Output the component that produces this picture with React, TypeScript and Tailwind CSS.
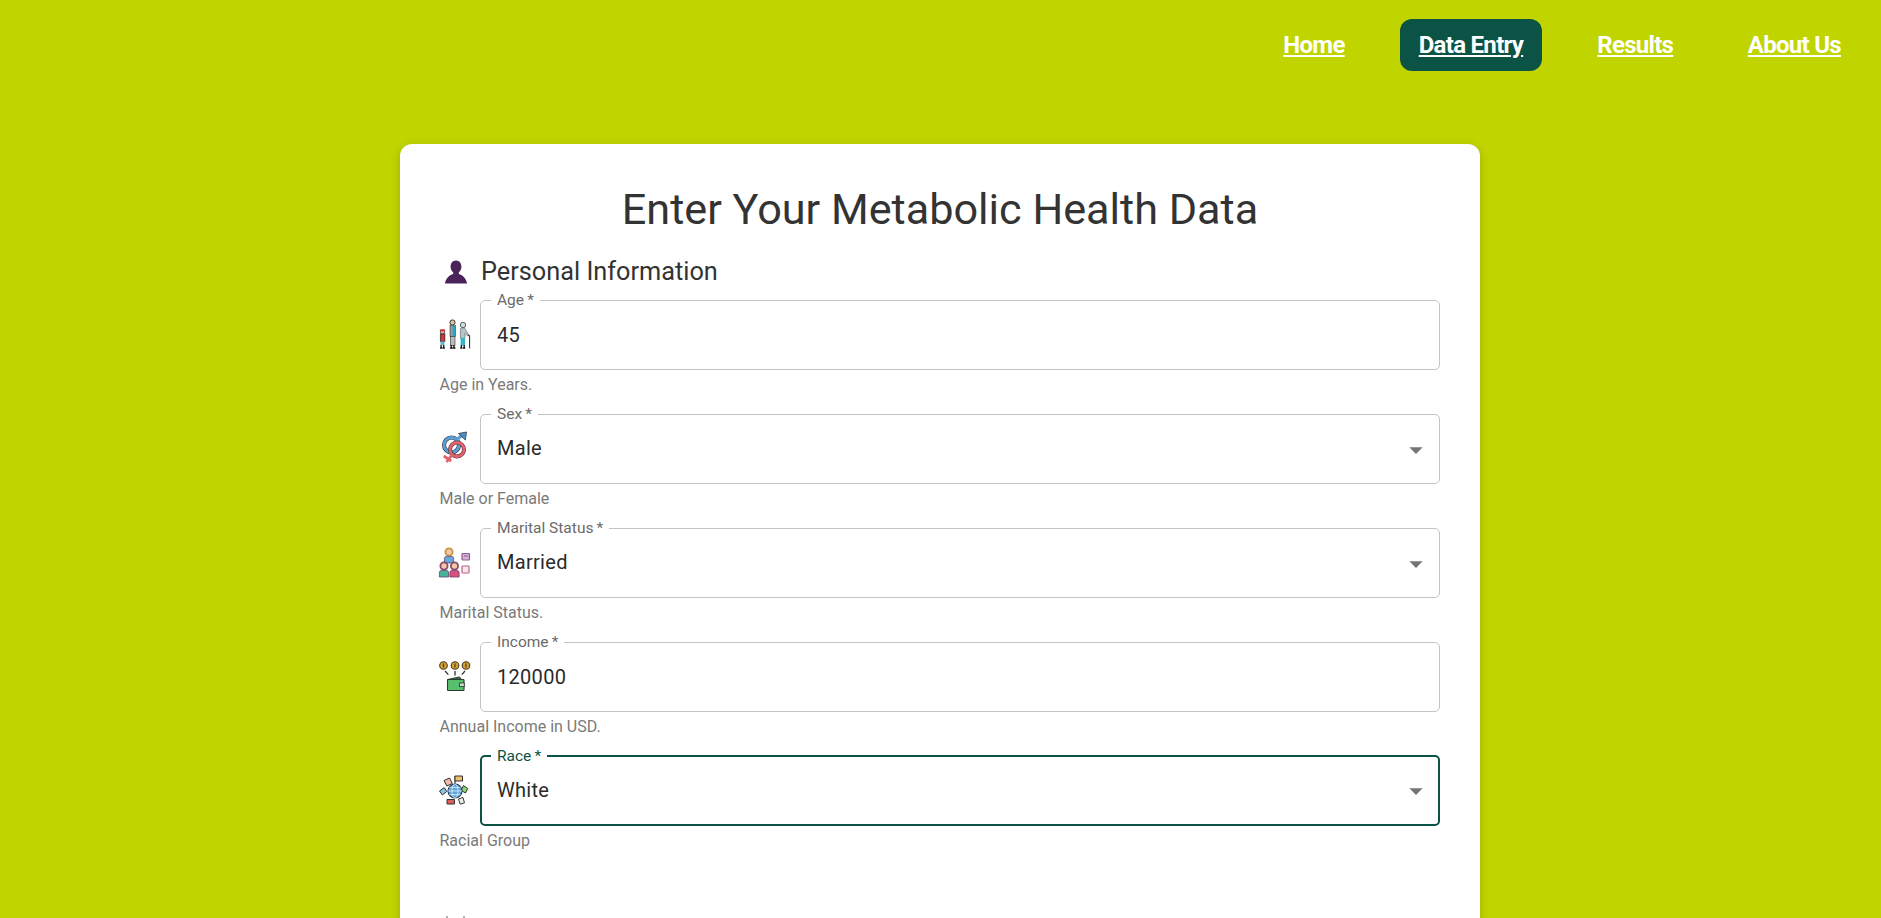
import type { ReactNode } from "react";

const navItems = ["Home", "Data Entry", "Results", "About Us"];

function AgeIcon() {
  return (
    <svg viewBox="0 0 40 40" className="w-10 h-10 shrink-0 -ml-[5px] mr-[5px]">
      {/* child */}
      <circle cx="7.500" cy="17" r="2.200" fill="#e9b9a0" stroke="#222" strokeWidth="0.700" />
      <path d="M4.900 16.400h5.200v-2h-5.200z" fill="#c83a3f" />
      <rect x="5.300" y="19" width="4.600" height="7.500" fill="#c83a3f" stroke="#222" strokeWidth="0.700" />
      <rect x="5.500" y="26.500" width="4" height="3.500" fill="#5fb6c6" />
      <path d="M5.100 33h2.200M7.700 33h2.200M6.100 30v3M8.700 30v3" stroke="#111" strokeWidth="1.300" />
      {/* adult */}
      <circle cx="17.500" cy="7.500" r="2.600" fill="#d9c2ae" stroke="#222" strokeWidth="0.900" />
      <rect x="15" y="10.500" width="5.400" height="11" fill="#9a9a9a" stroke="#333" strokeWidth="0.600" />
      <rect x="17.600" y="10.600" width="2.600" height="10.800" fill="#27a7c4" />
      <rect x="15.400" y="21.500" width="4.600" height="9" fill="#bbb" stroke="#333" strokeWidth="0.600" />
      <path d="M15 33h2.600M17.800 33h2.600M16.200 30v3M19 30v3" stroke="#111" strokeWidth="1.300" />
      {/* elder */}
      <circle cx="28" cy="10" r="2.700" fill="#d5dbdc" stroke="#566" strokeWidth="1" />
      <path d="M25.400 13.500l4-.8 4.400 7-1.500 1-2.300-2.400v5h-4.600z" fill="#b9c4c6" stroke="#566" strokeWidth="0.600" />
      <rect x="25.600" y="23" width="4.400" height="7.500" fill="#37b4cc" />
      <path d="M25.200 33h2.200M28 33h2.200M26.400 30v3M29.200 30v3" stroke="#111" strokeWidth="1.300" />
      <path d="M34.600 20.500v12.800M33 21.200q0-1.400 1.600-.9" stroke="#222" strokeWidth="1" fill="none" />
    </svg>
  );
}

function SexIcon() {
  return (
    <svg viewBox="0 0.500 40 40" className="w-10 h-10 shrink-0 -ml-[5px] mr-[5px]">
      <circle cx="16.500" cy="16.500" r="7.500" fill="none" stroke="#3f4452" strokeWidth="4.200" />
      <circle cx="16.500" cy="16.500" r="7.500" fill="none" stroke="#5a9fd6" strokeWidth="2.800" />
      <path d="M22 11l6-5" stroke="#5a9fd6" strokeWidth="3" />
      <path d="M23.500 5l8-1.500-1.200 8z" fill="#4b8fc8" stroke="#2f3b4a" strokeWidth="0.800" />
      <circle cx="22" cy="21" r="7" fill="none" stroke="#4a3a44" strokeWidth="4" />
      <circle cx="22" cy="21" r="7" fill="none" stroke="#e2636d" strokeWidth="2.800" />
      <path d="M17.200 26.200l-5.700 7.300M8.800 27.500l7.400 5" stroke="#e2636d" strokeWidth="2.800" />
    </svg>
  );
}

function MaritalIcon() {
  const Person = ({ x, y, shirt, hair }: { x: number; y: number; shirt: string; hair: string }) => (
    <g>
      <circle cx={x} cy={y} r="3.600" fill="#f2c9a8" stroke={hair} strokeWidth="1.800" />
      <path
        d={`M${x - 4.6} ${y + 11}v-4.4q0-2.2 2.2-2.2h4.800q2.200 0 2.200 2.200v4.400z`}
        fill={shirt}
        stroke="#6a3f6d"
        strokeWidth="0.800"
      />
    </g>
  );
  return (
    <svg viewBox="0 0 40 40" className="w-10 h-10 shrink-0 -ml-[5px] mr-[5px]">
      <Person x={14} y={9} shirt="#63a9dc" hair="#c9943f" />
      <Person x={9} y={23} shirt="#47b39b" hair="#8a4a6a" />
      <Person x={19.5} y={23} shirt="#d9517f" hair="#8a4a6a" />
      <rect x="27" y="10.500" width="7.500" height="6.500" rx="0.800" fill="#d7b2d8" stroke="#8c5a94" strokeWidth="1.200" />
      <path d="M29 13h4" stroke="#8c5a94" strokeWidth="1" />
      <rect x="27" y="23" width="7" height="7" rx="0.800" fill="#fde6e4" stroke="#b2688c" strokeWidth="1.200" />
    </svg>
  );
}

function IncomeIcon() {
  return (
    <svg viewBox="0 0 40 40" className="w-10 h-10 shrink-0 -ml-[5px] mr-[5px]">
      {[8.5, 20, 31].map((cx) => (
        <g key={cx}>
          <circle cx={cx} cy="8.500" r="3.800" fill="#d4a02f" stroke="#4a3b22" strokeWidth="1.100" />
          <path d={`M${cx} 6.500v4`} stroke="#4a3b22" strokeWidth="1.200" />
        </g>
      ))}
      <path d="M10 14l3.400 3.600M20 14v4.500M30 14l-3.200 3.600" stroke="#333" strokeWidth="1.300" />
      <path d="M12.500 22.500l12-2.600 2 2.600z" fill="#2f6d43" stroke="#22352a" strokeWidth="0.900" />
      <rect x="12.500" y="22.500" width="16.500" height="11" rx="0.800" fill="#58c06c" stroke="#2d3b30" strokeWidth="1.100" />
      <rect x="24.500" y="26" width="4.800" height="3.600" fill="#cfd9d2" stroke="#2d3b30" strokeWidth="0.800" />
    </svg>
  );
}

function RaceIcon() {
  return (
    <svg viewBox="0 0 40 40" className="w-10 h-10 shrink-0 -ml-[5px] mr-[5px]">
      <path d="M9 9.500l5.500-2.500 2.800 5.500-5.500 2.500z" fill="#f0b9ac" stroke="#333" strokeWidth="1" />
      <path d="M20 13V5" stroke="#333" strokeWidth="1.200" />
      <path d="M20 5h7.500v5H20z" fill="#efc06a" stroke="#333" strokeWidth="1" />
      <path d="M28.500 14.500l4.200 3-2.200 4.500-4.400-2.600z" fill="#8fd36f" stroke="#333" strokeWidth="1" />
      <path d="M4.500 20l4.700-3.400 2.600 3.800-4.400 3.600z" fill="#86c5e8" stroke="#333" strokeWidth="1" />
      <path d="M12 28.500h7.500v4.500H12z" fill="#e25a5a" stroke="#333" strokeWidth="1" />
      <path d="M23.500 28l4.400-1.600 1.600 5.400-4.400 1.400z" fill="#eee" stroke="#333" strokeWidth="1" />
      <circle cx="20" cy="20" r="7" fill="#5ea6dd" stroke="#23364a" strokeWidth="1.100" />
      <ellipse cx="20" cy="20" rx="3" ry="7" fill="none" stroke="#dff0fb" strokeWidth="0.800" />
      <path d="M13 20h14M14.400 16.400h11.200M14.400 23.600h11.200" stroke="#dff0fb" strokeWidth="0.800" />
    </svg>
  );
}

function OutlinedField({
  label,
  value,
  select,
  focused,
  icon,
  helper,
}: {
  label: string;
  value: string;
  select?: boolean;
  focused?: boolean;
  icon: ReactNode;
  helper: string;
}) {
  return (
    <div>
      <div className="flex items-center">
        {icon}
        <fieldset
          className={
            focused
              ? "flex-1 h-[78px] -mt-[8px] rounded-[5px] border-2 border-[#0b5345] pl-[15px] pr-[6px] flex items-center"
              : "flex-1 h-[78px] -mt-[8px] rounded-[5px] border border-[#c4c4c4] pl-[16px] pr-[7px] flex items-center"
          }
        >
          <legend
            className={
              focused
                ? "ml-[-6px] px-[6px] text-[15.5px] leading-[16px] text-[#0b5345]"
                : "ml-[-6px] px-[6px] text-[15.5px] leading-[16px] text-[#6b6b6b]"
            }
          >
            {label}
          </legend>
          <span
            className={
              select
                ? "flex-1 text-[20px] leading-[24px] tracking-[0.3px] text-[#2b2b2b] -mt-[8.5px]"
                : "flex-1 text-[20px] leading-[24px] tracking-[0.3px] text-[#2b2b2b] -mt-[7px]"
            }
          >
            {value}
          </span>
          {select && (
            <svg viewBox="0 0 24 24" className="w-8 h-8 -mt-[6px] fill-[#757575]">
              <path d="M7 10l5 5 5-5z" />
            </svg>
          )}
        </fieldset>
      </div>
      <p className="mt-[3px] -ml-[0.5px] text-[16px] leading-[24px] text-[#7a7a7a]">{helper}</p>
    </div>
  );
}

export default function App() {
  return (
    <div className="h-[918px] overflow-hidden bg-[#c0d400] font-['Roboto',sans-serif]">
      {/* nav */}
      <nav className="flex justify-end items-center gap-[36.5px] pr-[21px] pt-[19px]">
        {navItems.map((item) =>
          item === "Data Entry" ? (
            <a key={item} className="h-[52px] px-[18.5px] flex items-center rounded-[12px] bg-[#0b5345] text-white text-[24px] font-bold tracking-[-0.7px] underline">
              {item}
            </a>
          ) : (
            <a key={item} className="h-[52px] px-[19px] flex items-center text-white text-[24px] font-bold tracking-[-0.7px] underline">
              {item}
            </a>
          )
        )}
      </nav>

      <main className="w-[1080px] ml-[400px] mt-[73px] bg-white rounded-[12px] shadow-[0_3px_10px_rgba(0,0,0,0.18)] px-10 pt-[38px] pb-20">
        <h1 className="text-center text-[43.2px] leading-[56px] font-normal text-[#333333]">
          Enter Your Metabolic Health Data
        </h1>

        <div className="flex items-center mt-[16px] mb-[10px] h-[36px]">
          <svg viewBox="0 0 24 24" className="w-6 h-6 fill-[#4a235a] ml-[4px] mr-[13px] shrink-0">
            <path d="M12 .500c-3.400 0-5.400 2.800-5.400 6.200 0 2.400 1 4.400 2.600 5.600v1.800c-3.600 1-7.200 3.600-8.200 9.400h22c-1-5.800-4.600-8.400-8.200-9.400v-1.800c1.600-1.200 2.600-3.200 2.600-5.600 0-3.400-2-6.200-5.400-6.200z" />
          </svg>
          <h2 className="text-[25.3px] leading-[32px] font-normal text-[#333333]">Personal Information</h2>
        </div>

        <div className="flex flex-col gap-[17px]">
          <OutlinedField label={"Age\u2009*"} value="45" icon={<AgeIcon />} helper="Age in Years." />
          <OutlinedField label={"Sex\u2009*"} value="Male" select icon={<SexIcon />} helper="Male or Female" />
          <OutlinedField label={"Marital Status\u2009*"} value="Married" select icon={<MaritalIcon />} helper="Marital Status." />
          <OutlinedField label={"Income\u2009*"} value="120000" icon={<IncomeIcon />} helper="Annual Income in USD." />
          <OutlinedField label={"Race\u2009*"} value="White" select focused icon={<RaceIcon />} helper="Racial Group" />
        </div>

        {/* next section, cut off by the window */}
        <svg viewBox="0 0 28 28" className="w-[28px] h-[28px] mt-[62px] fill-none stroke-[#666]">
          <path d="M7 1v4M24 1v4" />
        </svg>
      </main>
    </div>
  );
}
